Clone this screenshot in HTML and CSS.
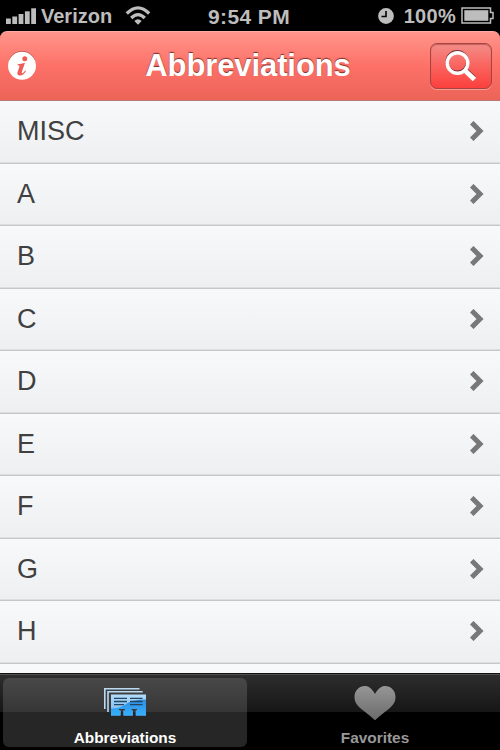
FILE: index.html
```html
<!DOCTYPE html>
<html lang="en">
<head>
  <meta charset="UTF-8" />
  <title>Abbreviations</title>
  <link rel="stylesheet" href="styles.css">
</head>
<body>
  <div class="phone">
    <div class="status-bar">
      <div class="status-left">
        <svg class="signal" width="30" height="16" viewBox="0 0 30 16" fill="#bdbdbd">
          <rect x="0" y="10.500" width="4.800" height="5.500" />
          <rect x="6.300" y="8.500" width="4.800" height="7.500" />
          <rect x="12.600" y="6" width="4.800" height="10" />
          <rect x="18.900" y="3.300" width="4.800" height="12.700" />
          <rect x="25.200" y="0.300" width="4.800" height="15.700" />
        </svg>
        <span class="carrier">Verizon</span>
        <svg class="wifi" width="26" height="19" viewBox="0 0 26 19" fill="none" stroke="#bdbdbd" stroke-width="3.200">
          <path d="M1.800 7.500 Q13 -3.800 24.200 7.500" />
          <path d="M6.200 12 Q13 5.200 19.800 12" />
          <path d="M13 18.700 L9.300 15 Q13 11.700 16.700 15 Z" fill="#bdbdbd" stroke="none" />
        </svg>
      </div>
      <div class="clock">9:54 PM</div>
      <div class="status-right">
        <svg class="alarm" width="16" height="16" viewBox="0 0 16 16">
          <circle cx="8" cy="8" r="7.900" fill="#bdbdbd" />
          <path d="M8 3v5.500H3.500" fill="none" stroke="#000" stroke-width="1.600" />
        </svg>
        <span class="percent">100%</span>
        <svg class="battery" width="34" height="17" viewBox="0 0 34 17">
          <path d="M1 1h28.500v4.500H32v6h-2.500V16H1z" fill="none" stroke="#bdbdbd" stroke-width="1.500" />
          <rect x="3.300" y="3.200" width="24" height="10.600" fill="#bdbdbd" />
        </svg>
      </div>
    </div>

    <div class="nav-bar">
      <svg class="info" width="28" height="30" viewBox="0 0 28 30">
        <circle cx="14" cy="13.800" r="13.800" fill="#b94c46" />
        <circle cx="14" cy="14.800" r="14" fill="#fff" />
        <circle cx="16.800" cy="7.800" r="2.500" fill="#ef5c55" />
        <path d="M9.500 13.200q3.800-.3 7.500-1.500l-3.200 9.300q-.3 1.500.6 1.200 1.500-.6 2.800-2.800l.9.600q-3 4.700-6.400 4.500-3-.2-2.200-3.200l1.900-5.600q.5-1.500-1.900-1.600z" fill="#ef5c55" />
      </svg>
      <h1 class="title">Abbreviations</h1>
      <div class="search-btn">
        <svg width="34" height="34" viewBox="0 0 34 34" fill="none">
          <g stroke="#79303a" transform="translate(-.3 -1.200)">
            <circle cx="13.500" cy="14" r="10.300" stroke-width="3" />
            <path d="M20.500 21l9.800 9.500" stroke-width="5" />
          </g>
          <g stroke="#fff">
            <circle cx="13.500" cy="14" r="10.300" stroke-width="3.400" />
            <path d="M21 21.500l9.500 9" stroke-width="4.800" />
          </g>
        </svg>
      </div>
    </div>

    <div class="list">
      <div class="row"><span>MISC</span><svg class="chevron" viewBox="0 0 14 20"><path d="M1.700 1.700l8.300 8.300-8.300 8.300" /></svg></div>
      <div class="row"><span>A</span><svg class="chevron" viewBox="0 0 14 20"><path d="M1.700 1.700l8.300 8.300-8.300 8.300" /></svg></div>
      <div class="row"><span>B</span><svg class="chevron" viewBox="0 0 14 20"><path d="M1.700 1.700l8.300 8.300-8.300 8.300" /></svg></div>
      <div class="row"><span>C</span><svg class="chevron" viewBox="0 0 14 20"><path d="M1.700 1.700l8.300 8.300-8.300 8.300" /></svg></div>
      <div class="row"><span>D</span><svg class="chevron" viewBox="0 0 14 20"><path d="M1.700 1.700l8.300 8.300-8.300 8.300" /></svg></div>
      <div class="row"><span>E</span><svg class="chevron" viewBox="0 0 14 20"><path d="M1.700 1.700l8.300 8.300-8.300 8.300" /></svg></div>
      <div class="row"><span>F</span><svg class="chevron" viewBox="0 0 14 20"><path d="M1.700 1.700l8.300 8.300-8.300 8.300" /></svg></div>
      <div class="row"><span>G</span><svg class="chevron" viewBox="0 0 14 20"><path d="M1.700 1.700l8.300 8.300-8.300 8.300" /></svg></div>
      <div class="row"><span>H</span><svg class="chevron" viewBox="0 0 14 20"><path d="M1.700 1.700l8.300 8.300-8.300 8.300" /></svg></div>
      <div class="row"></div>
    </div>

    <div class="tab-bar">
      <div class="tab active">
        <svg class="tab-icon" width="44" height="36" viewBox="0 0 44 36">
          <defs>
            <linearGradient id="card" x1="0" y1="0" x2="0" y2="1">
              <stop offset="0" stop-color="#b5dcfa" />
              <stop offset="1" stop-color="#6db5ee" />
            </linearGradient>
            <linearGradient id="shine" x1="0" y1="0" x2="0" y2="1">
              <stop offset="0" stop-color="#2f8de0" />
              <stop offset="1" stop-color="#35b0ff" />
            </linearGradient>
          </defs>
          <path d="M1.800 23V2.800h34.700" fill="none" stroke="#b9daf3" stroke-width="1.600" />
          <path d="M5 26V5.800h34.700" fill="none" stroke="#b9daf3" stroke-width="1.600" />
          <path d="M8 8.500h35V29.500H32.800V24.500H34.300V23H28.300V24.500H29.800V29.500H20.500V24.500H22V23H16V24.500H17.500V29.500H8z" fill="url(#card)" />
          <path d="M8 22.500q9 0 15-4.500T43 13.500V29.500H32.800V24.500H34.300V23H28.300V24.500H29.800V29.500H20.500V24.500H22V23H16V24.500H17.500V29.500H8z" fill="url(#shine)" />
          <path d="M11 12.300h13M11 15.500h13M11 18.700h10M27 12.300h12.500M27 15.500h12.500M27 18.700h12.500" stroke="#244461" stroke-width="1.300" />
        </svg>
        <span class="tab-label">Abbreviations</span>
      </div>
      <div class="tab">
        <svg class="tab-icon" width="44" height="36" viewBox="0 0 44 36">
          <defs>
            <linearGradient id="heart" x1="0" y1="0" x2="0" y2="1">
              <stop offset="0" stop-color="#969696" />
              <stop offset="1" stop-color="#6b6b6b" />
            </linearGradient>
          </defs>
          <path d="M22 8C19 2.500 15.500 0 12 0 6 0 1.500 4.700 1.500 11c0 5 2.500 8.300 6.200 11.400 5 4.200 10.500 8 14.300 11.800 3.800-3.800 9.300-7.600 14.300-11.800 3.700-3.100 6.200-6.400 6.200-11.400C42.500 4.700 38 0 32 0 28.500 0 25 2.500 22 8z" fill="url(#heart)" />
        </svg>
        <span class="tab-label">Favorites</span>
      </div>
    </div>
  </div>
</body>
</html>
```

FILE: styles.css
```css
body {
  margin: 0;
  background: #000;
  font-family: "Liberation Sans", Arial, sans-serif;
}
svg {
  display: block;
  flex: none;
}
.phone {
  width: 500px;
  height: 750px;
  display: flex;
  flex-direction: column;
  overflow: hidden;
}

/* status bar */
.status-bar {
  height: 31px;
  flex: none;
  box-sizing: border-box;
  padding: 0 5px 0 6px;
  display: grid;
  grid-template-columns: 1fr auto 1fr;
  align-items: center;
  color: #bdbdbd;
  font-size: 20px;
  font-weight: bold;
  line-height: 31px;
}
.status-left, .status-right {
  display: flex;
  align-items: center;
}
.status-left svg {
  margin-top: -1px;
}
.status-right {
  justify-content: flex-end;
}
.status-right svg {
  margin-top: -1px;
}
.carrier {
  margin-left: 5px;
  padding-top: 1px;
}
.wifi {
  margin-left: 13px;
}
.clock {
  margin-right: 3px;
  font-size: 21px;
  letter-spacing: 0.4px;
}
.percent {
  margin: 0 5px 0 10px;
  padding-top: 1px;
  letter-spacing: 0.3px;
}

/* header */
.nav-bar {
  height: 70px;
  flex: none;
  box-sizing: border-box;
  padding: 0 8px;
  display: grid;
  grid-template-columns: 62px 1fr 62px;
  align-items: center;
  background: linear-gradient(#ff958b, #fd7168 50%, #ec6358);
  border-top: 1px solid #ffaaa2;
  border-bottom: 1px solid #bb7778;
  border-radius: 7px 7px 0 0;
}
.title {
  margin: 0 4px 0 0;
  color: #fff;
  font-size: 31px;
  line-height: 68px;
  text-align: center;
  text-shadow: 0 -1px 1px #792f2c;
  letter-spacing: -0.1px;
}
.search-btn {
  width: 62px;
  height: 46px;
  box-sizing: border-box;
  margin-top: -1px;
  display: flex;
  align-items: center;
  justify-content: center;
  background: linear-gradient(#f38d88, #fa645f 50%, #fb403d);
  border: 1px solid #a84440;
  border-radius: 7px;
  box-shadow: 0 1px 0 #ff9b93, inset 0 1px 1px #a8444099;
}

/* letter rows */
.list {
  flex: 1;
  min-height: 0;
  overflow: hidden;
  background: #f7f8fa;
}
.row {
  height: 62.5px;
  box-sizing: border-box;
  padding: 0 16px 1px 17px;
  display: flex;
  align-items: center;
  justify-content: space-between;
  background: linear-gradient(#f8f9fb, #eeeff1);
  border-bottom: 1px solid #c6c7c9;
  box-shadow: inset 0 -1px 0 #dddee0;
  color: #404040;
  font-size: 27px;
}
.row span {
  padding-top: 1px;
}
.chevron {
  width: 14px;
  height: 20px;
  fill: none;
  stroke: #787878;
  stroke-width: 5;
}

/* bottom tabs */
.tab-bar {
  height: 77px;
  flex: none;
  box-sizing: border-box;
  padding: 4px 0 3px 3px;
  display: grid;
  grid-template-columns: 244px 1fr;
  gap: 3px;
  background: linear-gradient(#2e2e2e, #161616 38px, #000 38px);
  border-top: 1px solid #111;
  box-shadow: inset 0 1px 0 #505050;
}
.tab {
  display: flex;
  flex-direction: column;
  align-items: center;
  color: #999;
  border-radius: 6px;
}
.active {
  color: #fff;
  background: linear-gradient(#484848, #363636 34px, #262626 34px);
}
.tab-icon {
  margin-top: 8px;
}
.tab-label {
  margin-top: 7px;
  font-size: 15.4px;
  font-weight: bold;
  line-height: 18px;
}
```
